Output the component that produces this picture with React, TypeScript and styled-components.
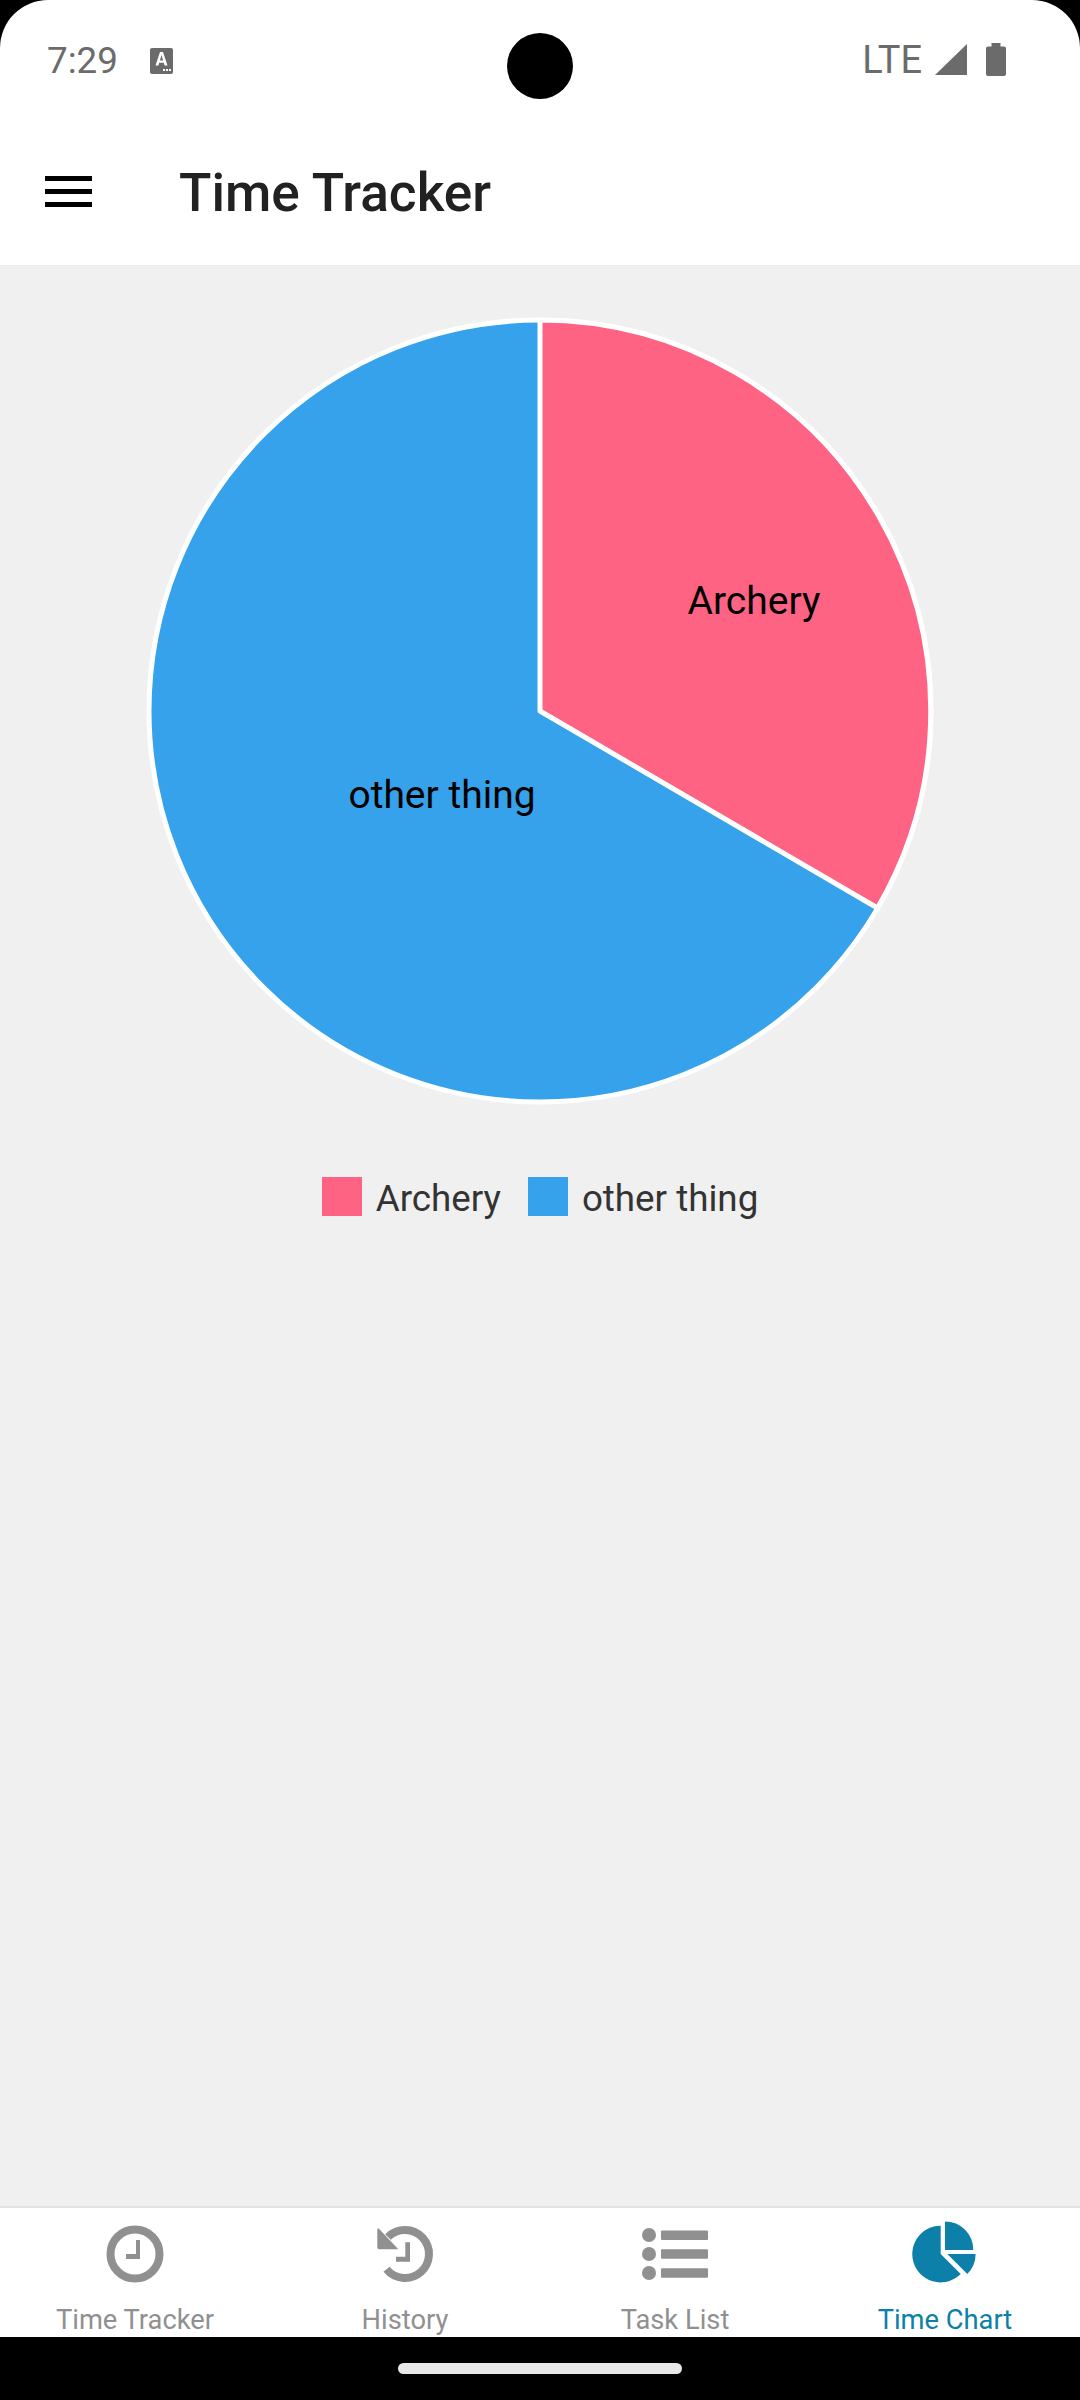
import React from 'react';
import styled, { createGlobalStyle } from 'styled-components';

const GlobalStyle = createGlobalStyle`
  html, body {
    margin: 0;
    padding: 0;
    background: #000;
  }
`;

const Screen = styled.div`
  position: relative;
  display: flex;
  flex-direction: column;
  width: 1080px;
  height: 2400px;
  overflow: hidden;
  background: #000;
  font-family: Roboto, "Noto Sans", sans-serif;
`;

const StatusBar = styled.div`
  display: flex;
  align-items: center;
  justify-content: space-between;
  height: 118px;
  padding: 0 74px 0 47px;
  box-sizing: border-box;
  background: #fff;
  border-radius: 48px 48px 0 0;
  color: #6b6b6b;
`;

const StatusGroup = styled.div<{ $gap: number; $drop?: number }>`
  display: flex;
  align-items: center;
  gap: ${({ $gap }) => $gap}px;
  margin-top: ${({ $drop }) => $drop ?? 0}px;
`;

const Clock = styled.span`
  font-size: 36.75px;
  line-height: 44px;
`;

const NetworkLabel = styled.span`
  margin-top: 2px;
  font-size: 38px;
  line-height: 44px;
`;

const BatteryIcon = styled.svg`
  margin-left: 6px;
`;

const Camera = styled.div`
  position: absolute;
  top: 33px;
  left: 507px;
  width: 66px;
  height: 66px;
  border-radius: 50%;
  background: #000;
`;

const AppBar = styled.header`
  display: flex;
  align-items: center;
  height: 147px;
  padding-left: 45px;
  box-sizing: border-box;
  background: #fff;
`;

const MenuButton = styled.div`
  display: flex;
  flex-direction: column;
  gap: 7.5px;
  width: 47px;
  margin-right: 87px;
`;

const MenuBar = styled.span`
  display: block;
  height: 5.5px;
  background: #000;
`;

const Title = styled.h1`
  margin: 2px 0 0;
  font-size: 53.2px;
  font-weight: 500;
  color: #212121;
`;

const Content = styled.main`
  flex: 1;
  display: flex;
  flex-direction: column;
  align-items: center;
  background: #f0f0f0;
  border-top: 1px solid #ececec;
  border-bottom: 2px solid #e2e2e2;
`;

const ChartSvg = styled.svg`
  display: block;
  width: 800px;
  height: 800px;
  margin-top: 45px;
`;

const SliceLabel = styled.text`
  font-family: Roboto, "Noto Sans", sans-serif;
  font-size: 39px;
  fill: #000;
  text-anchor: middle;
`;

const Legend = styled.div`
  display: flex;
  align-items: center;
  gap: 27px;
  margin-top: 66px;
`;

const LegendItem = styled.div`
  display: flex;
  align-items: center;
  gap: 14px;
`;

const Swatch = styled.span<{ $color: string }>`
  width: 40px;
  height: 39px;
  margin-bottom: 5px;
  background: ${({ $color }) => $color};
`;

const LegendText = styled.span`
  font-size: 36.75px;
  line-height: 44px;
  color: #333;
`;

const BottomNav = styled.nav`
  display: grid;
  grid-template-columns: repeat(4, 1fr);
  height: 129px;
  background: #fff;
  overflow: hidden;
`;

const NavItem = styled.div<{ $active?: boolean }>`
  display: flex;
  flex-direction: column;
  align-items: center;
  padding-top: 12px;
  color: ${({ $active }) => ($active ? '#0c80a8' : '#909090')};
`;

const NavGlyph = styled.svg`
  display: block;
  height: 64px;
  overflow: visible;
  fill: currentColor;
`;

const NavLabel = styled.span`
  margin-top: 20px;
  font-size: 27.3px;
  line-height: 32px;
`;

const GestureArea = styled.div`
  display: flex;
  justify-content: center;
  height: 63px;
  padding-top: 26px;
  box-sizing: border-box;
  background: #000;
`;

const GesturePill = styled.div`
  width: 284px;
  height: 11px;
  border-radius: 6px;
  background: #e8e8e8;
`;

const PINK = '#ff6384';
const BLUE = '#36a2eb';

const ClockIcon = () => (
  <NavGlyph width="60" viewBox="0 -4 60 64">
    <circle cx="30" cy="30" r="24.5" fill="none" stroke="currentColor" strokeWidth="8" />
    <path d="M31 16h4v19H21v-5h10z" />
  </NavGlyph>
);

const HistoryIcon = () => (
  <NavGlyph width="60" viewBox="0 -4 60 64">
    <path d="M13 13A24 24 0 1 1 11.5 45.3" fill="none" stroke="currentColor" strokeWidth="8" />
    <path d="M3.5 4.3 23.3 25.3H4.3a2 2 0 0 1-2-2V5z" />
    <path d="M30.3 18.3h4.7v19.4H21v-5h9.3z" />
  </NavGlyph>
);

const ListIcon = () => (
  <NavGlyph width="66" viewBox="0 -4 66 64">
    <circle cx="7" cy="11" r="7" />
    <circle cx="7" cy="30" r="7" />
    <circle cx="7" cy="49" r="7" />
    <rect x="19" y="6.5" width="47" height="9.5" rx="1" />
    <rect x="19" y="25.3" width="47" height="9.5" rx="1" />
    <rect x="19" y="44.2" width="47" height="9.5" rx="1" />
  </NavGlyph>
);

const PieIcon = () => (
  <NavGlyph width="60" viewBox="0 -4 60 64">
    <path d="M25.7 30V1.8A28.3 28.3 0 1 0 45.7 50Z" />
    <path d="M30 26V-2.6A28.3 28.3 0 0 1 58.3 26Z" />
    <path d="M32.3 30H60.6A28.3 28.3 0 0 1 52.3 50Z" />
  </NavGlyph>
);

const App: React.FC = () => (
  <Screen>
    <GlobalStyle />
    <StatusBar>
      <StatusGroup $gap={32} $drop={3}>
        <Clock>7:29</Clock>
        <svg width="23" height="26" viewBox="0 0 23 26">
          <rect width="23" height="26" rx="2" fill="#6b6b6b" />
          <path d="M5.5 17.500 10 4h3l4.500 13.500h-2.900l-.8-2.700H9.200l-.8 2.700zM9.900 12.400h3.200L11.500 7z" fill="#fff" />
          <path d="M13 21h2v2h-2zM16 21h2v2h-2zM19 21h2v2h-2z" fill="#fff" />
        </svg>
      </StatusGroup>
      <StatusGroup $gap={13}>
        <NetworkLabel>LTE</NetworkLabel>
        <svg width="32" height="31" viewBox="0 0 32 31">
          <path d="M32 0v31H0z" fill="#6b6b6b" />
        </svg>
        <BatteryIcon width="20" height="33" viewBox="0 0 20 33">
          <path d="M5.500 0h9v3.500H18a2 2 0 0 1 2 2V31a2 2 0 0 1-2 2H2a2 2 0 0 1-2-2V5.500a2 2 0 0 1 2-2h3.500z" fill="#6b6b6b" />
        </BatteryIcon>
      </StatusGroup>
    </StatusBar>
    <Camera />
    <AppBar>
      <MenuButton>
        <MenuBar />
        <MenuBar />
        <MenuBar />
      </MenuButton>
      <Title>Time Tracker</Title>
    </AppBar>
    <Content>
      <ChartSvg viewBox="0 0 800 800">
        <circle cx="400" cy="400" r="391" fill={BLUE} stroke="#fff" strokeWidth="5" />
        <path d="M400 400V9A391 391 0 0 1 737.500 597Z" fill={PINK} stroke="#fff" strokeWidth="5" strokeLinejoin="round" />
        <SliceLabel x="614" y="303">Archery</SliceLabel>
        <SliceLabel x="302" y="497">other thing</SliceLabel>
      </ChartSvg>
      <Legend>
        <LegendItem>
          <Swatch $color={PINK} />
          <LegendText>Archery</LegendText>
        </LegendItem>
        <LegendItem>
          <Swatch $color={BLUE} />
          <LegendText>other thing</LegendText>
        </LegendItem>
      </Legend>
    </Content>
    <BottomNav>
      <NavItem>
        <ClockIcon />
        <NavLabel>Time Tracker</NavLabel>
      </NavItem>
      <NavItem>
        <HistoryIcon />
        <NavLabel>History</NavLabel>
      </NavItem>
      <NavItem>
        <ListIcon />
        <NavLabel>Task List</NavLabel>
      </NavItem>
      <NavItem $active>
        <PieIcon />
        <NavLabel>Time Chart</NavLabel>
      </NavItem>
    </BottomNav>
    <GestureArea>
      <GesturePill />
    </GestureArea>
  </Screen>
);

export default App;
